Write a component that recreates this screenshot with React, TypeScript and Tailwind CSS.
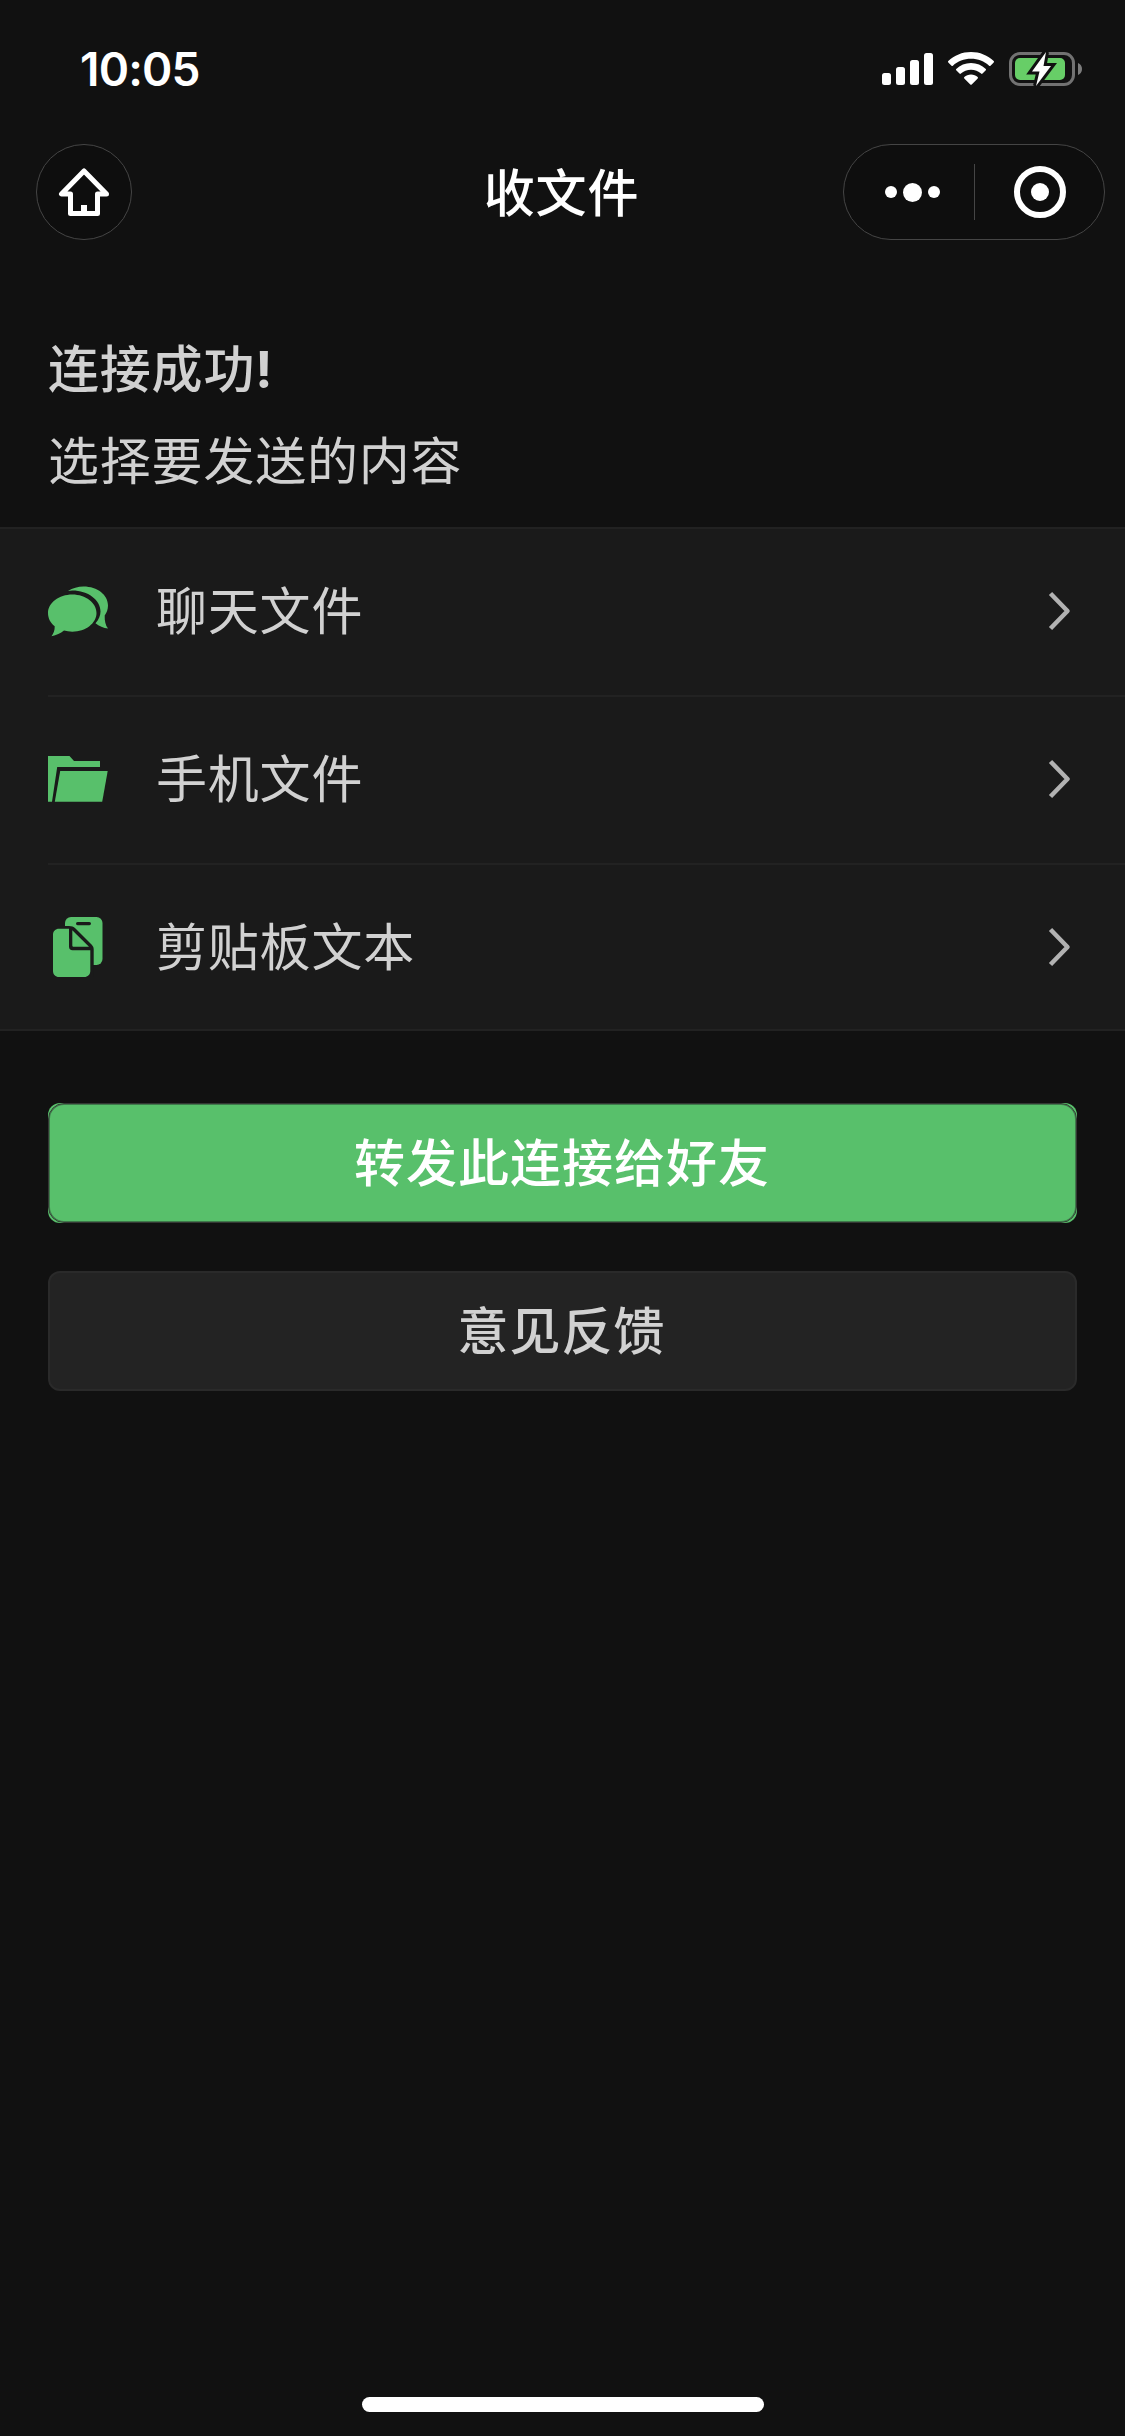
import type { ReactNode } from 'react'

function StatusBar() {
  return (
    <div className="flex h-[132px] items-start justify-between pl-20 pr-[42px] text-white">
      <div className="mt-[42px] font-['Inter',sans-serif] text-[46px] font-semibold leading-[54px] tracking-[-0.8px]">10:05</div>
      <div className="mt-[52px] flex items-start">
        <svg width="51" height="33" viewBox="0 0 51 33" fill="currentColor">
          <rect x="0" y="21" width="9" height="12" rx="2.5" />
          <rect x="14" y="15" width="9" height="18" rx="2.5" />
          <rect x="28" y="8" width="9" height="25" rx="2.5" />
          <rect x="42" y="1" width="9" height="32" rx="2.5" />
        </svg>
        <svg className="ml-[15px]" width="46" height="33" viewBox="0 0 46 33" fill="currentColor">
          <path d="M23 0C31.800 0 39.800 3.400 45.700 9C46.100 9.400 46.100 10 45.700 10.400L42.500 13.700C42.100 14.100 41.500 14.100 41.100 13.700C36.300 9.300 30 6.800 23 6.800S9.700 9.300 4.900 13.700C4.500 14.100 3.900 14.100 3.500 13.700L0.300 10.400C-0.100 10 -0.100 9.400 0.300 9C6.200 3.400 14.200 0 23 0Z" />
          <path d="M23 11C28.700 11 33.900 13.200 37.800 16.900C38.200 17.300 38.200 17.900 37.800 18.300L34.500 21.600C34.100 22 33.500 22 33.100 21.600C30.400 19.200 26.900 17.700 23 17.700S15.600 19.200 12.900 21.600C12.500 22 11.900 22 11.500 21.600L8.200 18.300C7.800 17.900 7.800 17.300 8.200 16.900C12.100 13.200 17.300 11 23 11Z" />
          <path d="M23 22.500C25.600 22.500 28 23.500 29.700 25C30.100 25.400 30.100 26 29.700 26.400L23.700 32.500C23.300 32.900 22.700 32.900 22.300 32.500L16.300 26.400C15.900 26 15.900 25.400 16.300 25C18 23.500 20.400 22.500 23 22.500Z" />
        </svg>
        <svg className="ml-[15px]" width="74" height="34" viewBox="0 0 74 34">
          <rect x="1.500" y="1.500" width="63" height="31" rx="9.500" fill="none" stroke="#727272" strokeWidth="3" />
          <path d="M69 11C71.500 12 73 14.300 73 17S71.500 22 69 23Z" fill="#7c7c7c" />
          <rect x="6" y="6" width="50" height="22" rx="5" fill="#67ce67" />
          <path d="M37 0L23 19.500H30.500L27 34L42 14H34.500Z" fill="#fff" stroke="#111111" strokeWidth="6" paintOrder="stroke" />
        </svg>
      </div>
    </div>
  )
}

function NavBar() {
  return (
    <div className="grid h-[120px] grid-cols-[1fr_auto_1fr] items-center pl-9 pr-5 text-white">
      <button className="flex size-24 items-center justify-center rounded-full border border-[#454545] bg-[#0e0e0e]">
        <svg width="52" height="50" viewBox="0 0 52 50" fill="none" stroke="currentColor" strokeWidth="5" strokeLinejoin="round">
          <path d="M26 4L3.500 27H12.500V46.500H39.500V27H48.500Z" />
          <path d="M26 38V46" strokeWidth="6" />
        </svg>
      </button>
      <h1 className="pr-[18px] pt-[5px] text-[51px] font-medium leading-[72px] tracking-[0.8px]">收文件</h1>
      <div className="flex h-24 w-[262px] items-center justify-self-end rounded-full border border-[#454545] bg-[#0e0e0e]">
        <button className="flex w-[130px] shrink-0 items-center justify-center gap-1.5 pl-1.5">
          <span className="size-3 rounded-full bg-white" />
          <span className="size-[19px] rounded-full bg-white" />
          <span className="size-3 rounded-full bg-white" />
        </button>
        <span className="h-14 w-px bg-[#454545]" />
        <button className="flex flex-1 items-center justify-center">
          <span className="flex size-[52px] items-center justify-center rounded-full border-[6px] border-white">
            <span className="size-[18px] rounded-full bg-white" />
          </span>
        </button>
      </div>
    </div>
  )
}

const chatIcon = (
  <svg width="60" height="60" viewBox="0 0 60 60" fill="currentColor">
    <path d="M24.300 13.500C37.700 13.500 48.500 21.800 48.500 32S37.700 50.700 24.300 50.700C21.300 50.700 18.500 50.300 16 49.600C12.500 52.200 8.500 54.500 3.500 55.300C5.600 52.500 6.800 49.500 6.700 45.300C2.500 42 0 37.300 0 32C0 21.800 10.900 13.500 24.300 13.500Z" />
    <path d="M20 10C24.500 7.200 30 5.500 35.500 5.500C49.500 5.500 60 14 60 24.500C60 28.500 58.700 31.500 56.700 34.500C56.500 40 57.500 44.300 60 47.500C55.500 47.300 51 45.200 47.500 42.300C50.800 38.500 52.500 34.800 52.500 30.500C52.500 19 40 9.500 24.300 9.500Z" />
  </svg>
)

const folderIcon = (
  <svg width="60" height="60" viewBox="0 0 60 60" fill="currentColor">
    <path d="M0 7H21.500L26 12H52V18H9.200L4 52.700H0Z" />
    <path d="M12.200 22H59.700L54.200 52.700H6.800Z" />
  </svg>
)

const clipboardIcon = (
  <svg width="60" height="60" viewBox="0 0 60 60">
    <rect x="17" y="0" width="37.500" height="48" rx="6" fill="currentColor" />
    <rect x="28" y="5" width="15" height="3.200" rx="1.600" fill="#1a1a1a" />
    <path d="M5 9H21C23.500 9 25.500 9.700 27.500 11.500L43.500 27.500C45 29 45.700 30.500 45.700 32.500V60H5Z" fill="#1a1a1a" />
    <path d="M11 11.700H21V29.500C21 32 22.300 33.300 24.500 33.300H42.300V54C42.300 57.500 39.800 60 36.300 60H11C7.500 60 5 57.500 5 54V17.700C5 14.200 7.500 11.700 11 11.700Z" fill="currentColor" />
    <path d="M24.300 13.300L41 29.800H26C24.800 29.800 24.300 29.300 24.300 28.200Z" fill="currentColor" />
  </svg>
)

const items = [
  { label: '聊天文件', icon: chatIcon },
  { label: '手机文件', icon: folderIcon },
  { label: '剪贴板文本', icon: clipboardIcon },
]

function Row({ label, icon, first }: { label: string; icon: ReactNode; first: boolean }) {
  return (
    <div className={`ml-12 flex items-center pr-[54px] ${first ? 'h-[166px] pb-0.5' : 'h-[168px] border-t-2 border-[#222222] pb-0.5'}`}>
      <span className="text-[#58c06b]">{icon}</span>
      <span className="ml-12 flex-1 pt-[3px] text-[51px] leading-[72px] tracking-[0.8px]">{label}</span>
      <svg width="23" height="40" viewBox="0 0 23 40" fill="none" stroke="#b2b2b2" strokeWidth="4.500" strokeLinejoin="round">
        <path d="M2.500 2.500L19.500 20L2.500 37.500" />
      </svg>
    </div>
  )
}

export default function App() {
  return (
    <div className="flex h-[2436px] w-[1125px] flex-col overflow-hidden bg-[#111111] font-['Liberation_Sans','Noto_Sans_CJK_SC',sans-serif] text-[#d1d1d1]">
      <StatusBar />
      <NavBar />

      <div className="px-12 pt-[73px]">
        <h2 className="h-[92px] text-[51px] font-medium leading-[92px] tracking-[0.8px]">
          连接成功<span className="font-['Inter',sans-serif] font-bold leading-none">!</span>
        </h2>
        <p className="text-[51px] leading-[92px] tracking-[0.8px]">选择要发送的内容</p>
      </div>

      <div className="mt-[18px] h-[504px] border-y-2 border-[#222222] bg-[#1a1a1a]">
        {items.map((item, i) => (
          <Row key={item.label} label={item.label} icon={item.icon} first={i === 0} />
        ))}
      </div>

      <div className="mt-[72px] flex flex-col gap-12 px-12">
        {/* the hairline has a larger radius than the fill, so green shows outside it at the corners */}
        <button className="relative h-[120px] rounded-xl bg-[#58c06b] pr-px pt-1 text-[51px] font-medium tracking-[1px] text-white before:absolute before:inset-0 before:rounded-[16px] before:border before:border-[#343834] before:shadow-[inset_0_0_0_1px_#3f7a4b]">转发此连接给好友</button>
        <button className="h-[120px] rounded-xl border-2 border-[#2a2a2a] bg-[#232323] pr-0.5 pt-1 text-[51px] font-medium tracking-[1px]">意见反馈</button>
      </div>

      <div className="mx-auto mb-6 mt-auto h-[15px] w-[402px] rounded-full bg-white" />
    </div>
  )
}
